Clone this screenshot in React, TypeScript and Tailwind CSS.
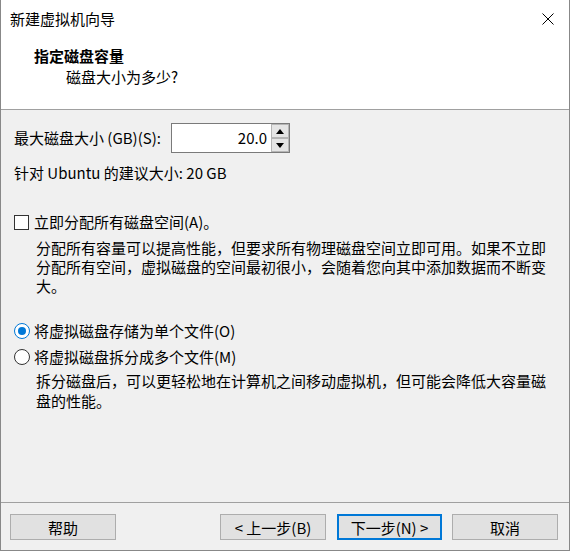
import React from "react";

const font = { fontFamily: '"Noto Sans CJK SC", "Microsoft YaHei", sans-serif' };

function Arrow({ up }: { up?: boolean }) {
  return (
    <svg width="8" height="5" viewBox="0 0 8 5">
      {up ? <polygon points="0,5 8,5 4,0" fill="#000" /> : <polygon points="0,0 8,0 4,5" fill="#000" />}
    </svg>
  );
}

function WizButton({ label, primary }: { label: string; primary?: boolean }) {
  return (
    <button
      className={
        primary
          ? "h-[26px] w-[105px] bg-[#e1e1e1] border-2 border-[#0078d7] text-[15px] leading-none"
          : "h-[26px] w-[106px] bg-[#e1e1e1] border border-[#adadad] text-[15px] leading-none"
      }
    >
      {label}
    </button>
  );
}

export default function App() {
  return (
    <div
      className="w-[570px] h-[551px] bg-[#f0f0f0] border-l border-r border-b border-[#888888] flex flex-col text-black text-[15px]"
      style={font}
    >
      {/* title bar */}
      <div className="h-[38px] bg-white flex items-center pl-[9px] pr-[15px]">
        <span className="leading-[20px]">新建虚拟机向导</span>
        <svg className="ml-auto" width="12" height="12" viewBox="0 0 12 12">
          <path d="M0.5 0.5 L11.5 11.5 M11.5 0.5 L0.5 11.5" stroke="#000" strokeWidth="1" />
        </svg>
      </div>

      {/* header */}
      <div className="h-[72px] bg-white border-b border-[#a0a0a0]">
        <div className="mt-[8px] pl-[33px] font-bold leading-[20px]">指定磁盘容量</div>
        <div className="mt-[1px] pl-[65px] leading-[20px]">磁盘大小为多少?</div>
      </div>

      {/* content */}
      <div className="pl-[13px] pr-[12px]">
        <div className="mt-[13px] h-[30px] flex items-center">
          <span className="leading-[20px] w-[157px]">最大磁盘大小 (GB)(S):</span>
          <div className="h-[30px] w-[119px] border border-[#7a7a7a] bg-white flex">
            <div className="flex-1 text-right pr-[4px] leading-[28px]">20.0</div>
            <div className="w-[18px] flex flex-col">
              <div className="flex-1 bg-[#e5e5e5] border border-[#b5b5b5] flex items-center justify-center">
                <Arrow up />
              </div>
              <div className="flex-1 bg-[#e5e5e5] border border-[#b5b5b5] flex items-center justify-center">
                <Arrow />
              </div>
            </div>
          </div>
        </div>

        <div className="mt-[10px] leading-[20px]">针对 Ubuntu 的建议大小: 20 GB</div>

        <div className="mt-[29px] h-[20px] flex items-center gap-[5px]">
          <div className="w-[15px] h-[15px] border border-[#333333] bg-white" />
          <span className="leading-[20px]">立即分配所有磁盘空间(A)。</span>
        </div>
        <div className="mt-[6px] pl-[22px] leading-[19px]">
          分配所有容量可以提高性能，但要求所有物理磁盘空间立即可用。如果不立即分配所有空间，虚拟磁盘的空间最初很小，会随着您向其中添加数据而不断变大。
        </div>

        <div className="mt-[24px] h-[24px] flex items-center gap-[4px]">
          <div className="w-[16px] h-[16px] rounded-full border border-[#0078d7] bg-white flex items-center justify-center">
            <div className="w-[8px] h-[8px] rounded-full bg-[#0078d7]" />
          </div>
          <span className="leading-[20px]">将虚拟磁盘存储为单个文件(O)</span>
        </div>
        <div className="mt-[2px] h-[24px] flex items-center gap-[4px]">
          <div className="w-[16px] h-[16px] rounded-full border border-[#333333] bg-white" />
          <span className="leading-[20px]">将虚拟磁盘拆分成多个文件(M)</span>
        </div>
        <div className="mt-[2px] pl-[22px] leading-[20px]">
          拆分磁盘后，可以更轻松地在计算机之间移动虚拟机，但可能会降低大容量磁盘的性能。
        </div>
      </div>

      <div className="flex-1" />

      {/* footer */}
      <div className="border-t border-[#a0a0a0] pt-[11px] pb-[10px] pl-[9px] pr-[11px] flex">
        <WizButton label="帮助" />
        <div className="ml-auto flex">
          <WizButton label="< 上一步(B)" />
          <div className="ml-[11px]">
            <WizButton label="下一步(N) >" primary />
          </div>
          <div className="ml-[10px]">
            <WizButton label="取消" />
          </div>
        </div>
      </div>
    </div>
  );
}
